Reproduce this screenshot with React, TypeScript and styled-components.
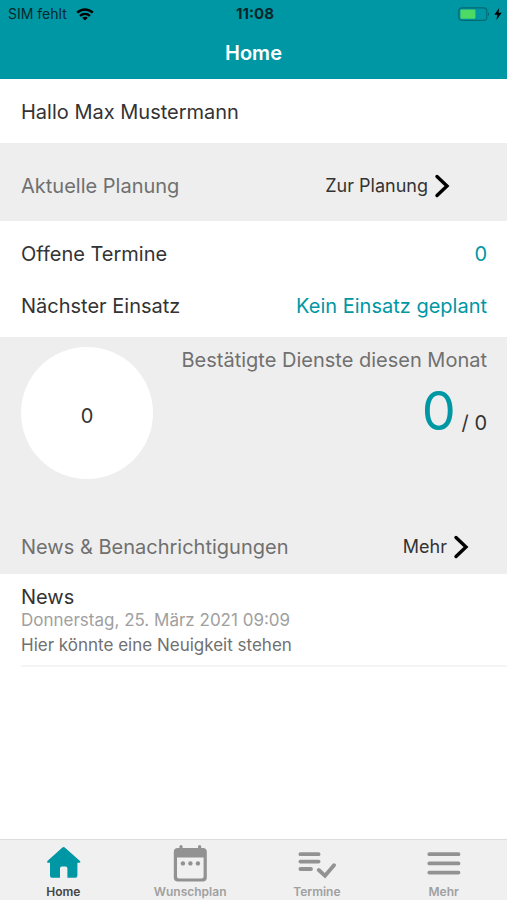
import React from "react";
import styled, { createGlobalStyle } from "styled-components";

const teal = "#0097a5";
const band = "#eeeeee";
const ink = "#333333";
const grey = "#707070";

const GlobalStyle = createGlobalStyle`
  * { box-sizing: border-box; }
  body { margin: 0; background: #fff; }
  body, button { font-family: Inter, "Liberation Sans", sans-serif; }
  h1, h2, h3, p { margin: 0; font-weight: 400; }
`;

const Screen = styled.div`
  display: flex;
  flex-direction: column;
  min-height: 100vh;
  color: ${ink};
  font-size: 20px;
  line-height: 24px;
`;

const Header = styled.header`
  background: ${teal};
  padding-bottom: 14px;
`;

const StatusBar = styled.div`
  display: grid;
  grid-template-columns: 1fr auto 1fr;
  align-items: center;
  height: 28px;
  padding: 0 5px 0 8px;
  color: #06272b;
  font-size: 14px;
  line-height: 20px;
`;

const StatusGroup = styled.div<{ $end?: boolean }>`
  display: flex;
  align-items: center;
  justify-content: ${(p) => (p.$end ? "flex-end" : "flex-start")};
  gap: ${(p) => (p.$end ? 4 : 9)}px;
`;

const Clock = styled.time`
  font-size: 15px;
  font-weight: 700;
`;

const Title = styled.h1`
  padding-top: 13px;
  color: #fff;
  text-align: center;
  font-size: 20px;
  font-weight: 600;
  line-height: 24px;
`;

const Main = styled.main`
  flex: 1;
`;

const Greeting = styled.p`
  padding: 21px 20px 19px 21px;
`;

const Band = styled.section<{ $tight?: boolean }>`
  display: flex;
  align-items: center;
  justify-content: space-between;
  background: ${band};
  padding: ${(p) => (p.$tight ? "12px 37px 12px 21px" : "28px 56px 20px 21px")};
`;

const Heading = styled.h2`
  color: ${grey};
  font-size: 20px;
  line-height: 30px;
`;

const MoreButton = styled.button`
  display: flex;
  align-items: center;
  gap: 5px;
  border: 0;
  padding: 0;
  background: none;
  color: ${ink};
  font-size: 18px;
  line-height: 24px;
`;

const Facts = styled.dl`
  margin: 0;
  padding: 7px 20px 5px 21px;
`;

const Fact = styled.div`
  display: flex;
  align-items: center;
  justify-content: space-between;
  height: 52px;
`;

const Value = styled.dd`
  margin: 0;
  color: ${teal};
`;

const Stats = styled.section`
  display: flex;
  justify-content: space-between;
  padding: 10px 20px 41px 21px;
  background: ${band};
`;

const Dial = styled.div`
  display: flex;
  align-items: center;
  justify-content: center;
  width: 132px;
  height: 132px;
  padding-top: 6px;
  border-radius: 50%;
  background: #fff;
`;

const Summary = styled.div`
  text-align: right;

  ${Heading} {
    line-height: 26px;
  }
`;

const Score = styled.p`
  line-height: 76px;
`;

const Big = styled.span`
  color: ${teal};
  font-size: 54px;
`;

const Article = styled.article`
  margin-left: 21px;
  padding: 11px 20px 8px 0;
  border-bottom: 2px solid #f4f4f4;
`;

const ArticleTitle = styled.h3`
  font-size: 20px;
  line-height: 24px;
`;

const DateLine = styled.p`
  color: #a0a0a0;
  font-size: 17px;
  line-height: 22px;
`;

const Body = styled.p`
  padding-top: 2px;
  color: ${grey};
  font-size: 17px;
  line-height: 24px;
`;

const TabBar = styled.nav`
  display: grid;
  grid-template-columns: repeat(4, 1fr);
  height: 61px;
  border-top: 1px solid #dcdcdc;
  background: #f0f0f0;
`;

const Tab = styled.button<{ $active?: boolean }>`
  display: flex;
  flex-direction: column;
  align-items: center;
  gap: 1px;
  border: 0;
  padding: 5px 0 0;
  background: none;
  color: ${(p) => (p.$active ? "#444" : "#a0a0a0")};
  font-size: 12px;
  font-weight: 600;
  line-height: 16px;

  svg {
    color: ${(p) => (p.$active ? teal : "#929292")};
  }
`;

const Chevron = () => (
  <svg width="18" height="24" viewBox="0 0 18 24" fill="none" aria-hidden="true">
    <path d="M4 2.5L14 12L4 21.5" stroke="#000" strokeWidth="3.4" strokeLinecap="round" strokeLinejoin="miter" />
  </svg>
);

const Wifi = () => (
  <svg width="18" height="13" viewBox="0 0 18 13" fill="none" stroke="#000" strokeWidth="2.4" aria-label="WLAN">
    <path d="M1.2 4.7C5.8 0.4 12.2 0.4 16.8 4.7" />
    <path d="M4 7.9C7 5.2 11 5.2 14 7.9" />
    <path d="M9 12.6L6.2 9.8C7.8 8.5 10.2 8.5 11.8 9.8Z" fill="#000" stroke="none" />
  </svg>
);

const Battery = () => (
  <svg width="32" height="15" viewBox="0 0 32 15" aria-label="Batterie">
    <rect x="0.8" y="0.8" width="28" height="12.6" rx="3.2" fill="none" stroke="#056973" strokeWidth="1.2" />
    <rect x="2.4" y="2.4" width="15" height="9.4" rx="1" fill="#4cd964" />
    <path d="M30 5.2C31.7 6 31.7 8.2 30 9Z" fill="#056973" />
  </svg>
);

const Bolt = () => (
  <svg width="8" height="12" viewBox="0 0 8 12" aria-label="Lädt">
    <path d="M5.2 0L0.3 6.8H3.4L2.4 12L7.7 4.8H4.5Z" fill="#000" />
  </svg>
);

const HomeIcon = () => (
  <svg width="38" height="38" viewBox="0 0 38 38" aria-hidden="true">
    <path
      d="M18.4 2.6Q19.6 1.5 20.8 2.6L36 16Q37.2 17.6 35.4 17.8H33.4V30.8Q33.4 32.8 31.4 32.8H23.4V23.2Q23.4 21.4 21.6 21.4H17.8Q16 21.4 16 23.2V32.8H8Q6 32.8 6 30.8V17.8H4Q2.2 17.6 3.4 16Z"
      fill="currentColor"
    />
  </svg>
);

const CalendarIcon = () => (
  <svg width="38" height="38" viewBox="0 0 38 38" aria-hidden="true">
    <path
      fill="currentColor"
      fillRule="evenodd"
      d="M8.4 1.6Q8.4 0 10 0T11.6 1.6V3H27V1.6Q27 0 28.6 0T30.2 1.6V3H32Q35.8 3 35.8 7V32.6Q35.8 36.6 31.8 36.6H6.8Q2.8 36.6 2.8 32.6V7Q2.8 3 6.8 3H8.4ZM6 12.4V31.4Q6 33.4 8 33.4H30.6Q32.6 33.4 32.6 31.4V12.4Z"
    />
    <g fill="currentColor">
      <circle cx="11.9" cy="18.4" r="2.2" />
      <circle cx="19.4" cy="18.4" r="2.2" />
      <circle cx="26.9" cy="18.4" r="2.2" />
    </g>
  </svg>
);

const ChecklistIcon = () => (
  <svg width="38" height="38" viewBox="0 0 38 38" fill="none" stroke="currentColor" strokeLinecap="round" aria-hidden="true">
    <path d="M2.4 9.2H20.6M2.4 16.6H20.6M2.4 24H13" strokeWidth="3.8" />
    <path d="M20.8 25L27 30.8L36 20.2" strokeWidth="3.8" />
  </svg>
);

const MenuIcon = () => (
  <svg width="38" height="38" viewBox="0 0 38 38" fill="none" stroke="currentColor" strokeLinecap="round" aria-hidden="true">
    <path d="M4.3 9.2H33.5M4.3 18.4H33.5M4.3 27.6H33.5" strokeWidth="3.8" />
  </svg>
);

const tabs = [
  { label: "Home", Icon: HomeIcon },
  { label: "Wunschplan", Icon: CalendarIcon },
  { label: "Termine", Icon: ChecklistIcon },
  { label: "Mehr", Icon: MenuIcon },
];

export default function App() {
  return (
    <Screen>
      <GlobalStyle />
      <Header>
        <StatusBar>
          <StatusGroup>
            <span>SIM fehlt</span>
            <Wifi />
          </StatusGroup>
          <Clock>11:08</Clock>
          <StatusGroup $end>
            <Battery />
            <Bolt />
          </StatusGroup>
        </StatusBar>
        <Title>Home</Title>
      </Header>
      <Main>
        <Greeting>Hallo Max Mustermann</Greeting>
        <Band>
          <Heading>Aktuelle Planung</Heading>
          <MoreButton type="button">
            Zur Planung
            <Chevron />
          </MoreButton>
        </Band>
        <Facts>
          <Fact>
            <dt>Offene Termine</dt>
            <Value>0</Value>
          </Fact>
          <Fact>
            <dt>Nächster Einsatz</dt>
            <Value>Kein Einsatz geplant</Value>
          </Fact>
        </Facts>
        <Stats>
          <Dial>0</Dial>
          <Summary>
            <Heading>Bestätigte Dienste diesen Monat</Heading>
            <Score>
              <Big>0</Big> / 0
            </Score>
          </Summary>
        </Stats>
        <Band $tight>
          <Heading>News &amp; Benachrichtigungen</Heading>
          <MoreButton type="button">
            Mehr
            <Chevron />
          </MoreButton>
        </Band>
        <Article>
          <ArticleTitle>News</ArticleTitle>
          <DateLine>Donnerstag, 25. März 2021 09:09</DateLine>
          <Body>Hier könnte eine Neuigkeit stehen</Body>
        </Article>
      </Main>
      <TabBar>
        {tabs.map(({ label, Icon }, i) => (
          <Tab key={label} type="button" $active={i === 0} aria-current={i === 0 ? "page" : undefined}>
            <Icon />
            {label}
          </Tab>
        ))}
      </TabBar>
    </Screen>
  );
}
